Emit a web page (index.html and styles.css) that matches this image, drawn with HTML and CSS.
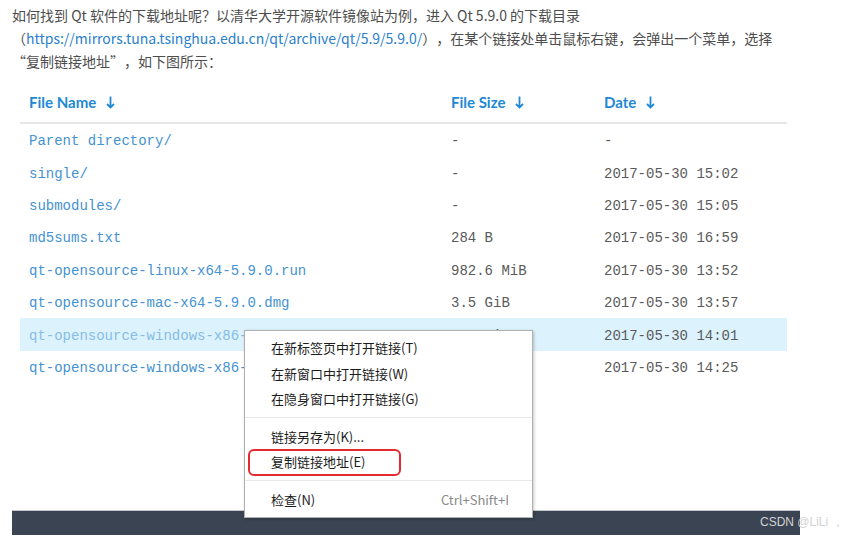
FILE: index.html
```html
<!DOCTYPE html>
<html lang="zh">
<head>
<meta charset="utf-8">
<title>Qt 下载</title>
<link rel="stylesheet" href="styles.css">
</head>
<body>
<div class="page">
  <p class="intro">如何找到 Qt 软件的下载地址呢？以清华大学开源软件镜像站为例，进入 Qt 5.9.0 的下载目录<br>（<span class="link">https://mirrors.tuna.tsinghua.edu.cn/qt/archive/qt/5.9/5.9.0/</span>），在某个链接处单击鼠标右键，会弹出一个菜单，选择<br>“复制链接地址”，如下图所示：</p>

  <div class="shot">
    <div class="table">
      <div class="head">
        <div class="hcell">File Name <svg class="arrow" width="9" height="13" viewBox="0 0 9 13"><path d="M4.5 0.5V11.5M1 8L4.5 11.5L8 8" fill="none" stroke="currentColor" stroke-width="1.8"/></svg></div>
        <div class="hcell">File Size <svg class="arrow" width="9" height="13" viewBox="0 0 9 13"><path d="M4.5 0.5V11.5M1 8L4.5 11.5L8 8" fill="none" stroke="currentColor" stroke-width="1.8"/></svg></div>
        <div class="hcell">Date <svg class="arrow" width="9" height="13" viewBox="0 0 9 13"><path d="M4.5 0.5V11.5M1 8L4.5 11.5L8 8" fill="none" stroke="currentColor" stroke-width="1.8"/></svg></div>
      </div>
      <div class="row"><span class="name">Parent directory/</span><span class="meta">-</span><span class="meta">-</span></div>
      <div class="row"><span class="name">single/</span><span class="meta">-</span><span class="meta">2017-05-30 15:02</span></div>
      <div class="row"><span class="name">submodules/</span><span class="meta">-</span><span class="meta">2017-05-30 15:05</span></div>
      <div class="row"><span class="name">md5sums.txt</span><span class="meta">284 B</span><span class="meta">2017-05-30 16:59</span></div>
      <div class="row"><span class="name">qt-opensource-linux-x64-5.9.0.run</span><span class="meta">982.6 MiB</span><span class="meta">2017-05-30 13:52</span></div>
      <div class="row"><span class="name">qt-opensource-mac-x64-5.9.0.dmg</span><span class="meta">3.5 GiB</span><span class="meta">2017-05-30 13:57</span></div>
      <div class="row active"><span class="name">qt-opensource-windows-x86-5.9.0.exe</span><span class="meta">2.3 GiB</span><span class="meta">2017-05-30 14:01</span></div>
      <div class="row"><span class="name">qt-opensource-windows-x86-android-5.9.0.exe</span><span class="meta">2.4 GiB</span><span class="meta">2017-05-30 14:25</span></div>
    </div>
    <div class="bar"></div>
  </div>

  <div class="menu">
    <div class="item">在新标签页中打开链接(T)</div>
    <div class="item">在新窗口中打开链接(W)</div>
    <div class="item">在隐身窗口中打开链接(G)</div>
    <div class="sep"></div>
    <div class="item">链接另存为(K)...</div>
    <div class="item">复制链接地址(E)</div>
    <div class="sep"></div>
    <div class="item split"><span>检查(N)</span><span class="key">Ctrl+Shift+I</span></div>
    <div class="mark"></div>
  </div>

  <div class="watermark">CSDN @LiLi ，</div>
</div>
</body>
</html>
```
FILE: styles.css
```css
* { box-sizing: border-box; }
html, body { margin: 0; padding: 0; background: #fff; }
.page {
  position: relative;
  width: 852px;
  height: 538px;
  overflow: hidden;
}
.intro {
  margin: 0;
  padding: 4px 0 0 12px;
  font-family: "Noto Sans CJK SC", "Noto Sans", sans-serif;
  font-size: 14px;
  line-height: 23px;
  color: #4d4d4d;
  text-spacing-trim: space-all;
}
.link { color: #2b7fcc; }

.shot {
  margin-left: 12px;
  width: 788px;
  height: 462px;
  display: flex;
  flex-direction: column;
}
.table {
  margin-left: 8px;
  width: 767px;
}
.head {
  display: grid;
  grid-template-columns: 422px 153px 1fr;
  height: 51px;
  align-items: end;
  padding: 0 0 10px 9px;
  border-bottom: 2px solid #e6e6e6;
}
.hcell {
  display: flex;
  align-items: center;
  gap: 10px;
  font-family: Lato, "Noto Sans", sans-serif;
  font-weight: 700;
  font-size: 15px;
  line-height: 20px;
  color: #2188d4;
}
.arrow { display: block; }
.row {
  display: grid;
  grid-template-columns: 422px 153px 1fr;
  height: 32.4px;
  align-items: center;
  padding: 2px 0 0 9px;
  font-family: "Liberation Mono", "DejaVu Sans Mono", monospace;
  font-size: 14px;
  white-space: nowrap;
}
.row.active { background: #dcf2fd; }
.row.active .name { color: #86bde6; }
.name { color: #4592d2; }
.meta { color: #5a5a5a; }

.bar {
  margin-top: auto;
  height: 25px;
  background: #3a4452;
  border-top: 1px solid #c3c7cc;
}

.menu {
  position: absolute;
  left: 244px;
  top: 330px;
  width: 289px;
  padding: 4px 0 5px;
  background: #fff;
  border: 1px solid #b0b0b0;
  box-shadow: 1px 1px 3px rgba(0, 0, 0, 0.22);
  font-family: "Noto Sans CJK SC", "Noto Sans", sans-serif;
  font-size: 13px;
  color: #1c1c1c;
}
.item {
  height: 25.5px;
  line-height: 25.5px;
  padding: 0 23px 0 26px;
}
.split {
  display: flex;
  justify-content: space-between;
}
.key { color: #8a8a8a; }
.sep {
  height: 12px;
  position: relative;
}
.sep::after {
  content: "";
  position: absolute;
  left: 0;
  right: 0;
  top: 5px;
  height: 1px;
  background: #e8e8e8;
}
.mark {
  position: absolute;
  left: 3px;
  top: 118px;
  width: 153px;
  height: 27px;
  border: 2px solid #e42a2f;
  border-radius: 6px;
}

.watermark {
  position: absolute;
  left: 760px;
  top: 514px;
  font-family: "Liberation Sans", sans-serif;
  font-size: 12px;
  line-height: 16px;
  color: #d2d2d2;
  white-space: nowrap;
}
```
